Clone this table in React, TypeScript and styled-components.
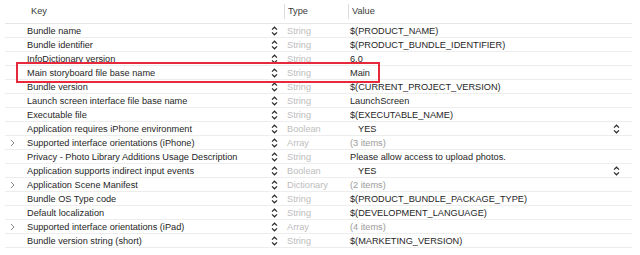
import React from "react";
import styled, { createGlobalStyle } from "styled-components";

const GlobalStyle = createGlobalStyle`
  html, body {
    margin: 0;
    padding: 0;
    background: #ffffff;
  }
  body {
    font-family: "Liberation Sans", Arial, sans-serif;
    font-size: 9.2px;
    color: #262626;
  }
`;

interface Entry {
  key: string;
  type: string;
  value: string;
  expandable?: boolean;
  popup?: boolean;
  muted?: boolean;
}

const entries: Entry[] = [
  { key: "Bundle name", type: "String", value: "$(PRODUCT_NAME)" },
  { key: "Bundle identifier", type: "String", value: "$(PRODUCT_BUNDLE_IDENTIFIER)" },
  { key: "InfoDictionary version", type: "String", value: "6.0" },
  { key: "Main storyboard file base name", type: "String", value: "Main" },
  { key: "Bundle version", type: "String", value: "$(CURRENT_PROJECT_VERSION)" },
  { key: "Launch screen interface file base name", type: "String", value: "LaunchScreen" },
  { key: "Executable file", type: "String", value: "$(EXECUTABLE_NAME)" },
  { key: "Application requires iPhone environment", type: "Boolean", value: "YES", popup: true },
  { key: "Supported interface orientations (iPhone)", type: "Array", value: "(3 items)", expandable: true, muted: true },
  { key: "Privacy - Photo Library Additions Usage Description", type: "String", value: "Please allow access to upload photos." },
  { key: "Application supports indirect input events", type: "Boolean", value: "YES", popup: true },
  { key: "Application Scene Manifest", type: "Dictionary", value: "(2 items)", expandable: true, muted: true },
  { key: "Bundle OS Type code", type: "String", value: "$(PRODUCT_BUNDLE_PACKAGE_TYPE)" },
  { key: "Default localization", type: "String", value: "$(DEVELOPMENT_LANGUAGE)" },
  { key: "Supported interface orientations (iPad)", type: "Array", value: "(4 items)", expandable: true, muted: true },
  { key: "Bundle version string (short)", type: "String", value: "$(MARKETING_VERSION)" },
];

const Table = styled.div`
  position: relative;
  margin-left: 5px;
  width: 627px;
`;

const HeaderRow = styled.div`
  display: grid;
  grid-template-columns: 26px 253px 64px 1fr;
  height: 23px;
  align-items: center;
  border-bottom: 1px solid #e6e6e6;
  color: #3a3a3a;
`;

const HeaderCell = styled.div<{ divider?: boolean }>`
  height: 15px;
  line-height: 15px;
  padding-left: ${(p) => (p.divider ? "3px" : "0")};
  border-left: ${(p) => (p.divider ? "1px solid #dcdcdc" : "none")};
`;

const Row = styled.div`
  display: grid;
  grid-template-columns: 22px 241px 12px 70px 1fr;
  height: 13px;
  align-items: center;
  border-bottom: 1px solid #ededed;
`;

const Disclosure = styled.div`
  display: flex;
  align-items: center;
  padding-left: 5px;
`;

const KeyCell = styled.div`
  white-space: nowrap;
  overflow: hidden;
`;

const Stepper = styled.div`
  display: flex;
  align-items: center;
  justify-content: center;
`;

const TypeCell = styled.div`
  padding-left: 7px;
  color: #bdbdbd;
  white-space: nowrap;
  overflow: hidden;
`;

const ValueCell = styled.div<{ muted?: boolean; popup?: boolean }>`
  display: flex;
  align-items: center;
  justify-content: space-between;
  padding-left: ${(p) => (p.popup ? "8px" : "0")};
  padding-right: 12px;
  color: ${(p) => (p.muted ? "#9a9a9a" : "#262626")};
  white-space: nowrap;
`;

const Highlight = styled.div`
  position: absolute;
  left: 11px;
  top: 62px;
  width: 360px;
  height: 17px;
  border: 2px solid #e8283b;
  pointer-events: none;
`;

const UpDown = () => (
  <svg width="7" height="10" viewBox="0 0 7 10">
    <path d="M1 3.6 L3.5 1.2 L6 3.6" fill="none" stroke="#2b2b2b" strokeWidth="1.2" />
    <path d="M1 6.4 L3.5 8.8 L6 6.4" fill="none" stroke="#2b2b2b" strokeWidth="1.2" />
  </svg>
);

const Chevron = () => (
  <svg width="5" height="8" viewBox="0 0 5 8">
    <path d="M1 1 L4 4 L1 7" fill="none" stroke="#8a8a8a" strokeWidth="1" />
  </svg>
);

const App = (): JSX.Element => {
  return (
    <>
      <GlobalStyle />
      <Table>
        <HeaderRow>
          <div />
          <HeaderCell>Key</HeaderCell>
          <HeaderCell divider>Type</HeaderCell>
          <HeaderCell divider>Value</HeaderCell>
        </HeaderRow>
        {entries.map((el) => (
          <Row key={el.key}>
            <Disclosure>{el.expandable && <Chevron />}</Disclosure>
            <KeyCell>{el.key}</KeyCell>
            <Stepper>
              <UpDown />
            </Stepper>
            <TypeCell>{el.type}</TypeCell>
            <ValueCell muted={el.muted} popup={el.popup}>
              <span>{el.value}</span>
              {el.popup && <UpDown />}
            </ValueCell>
          </Row>
        ))}
        <Highlight />
      </Table>
    </>
  );
};

export default App;
